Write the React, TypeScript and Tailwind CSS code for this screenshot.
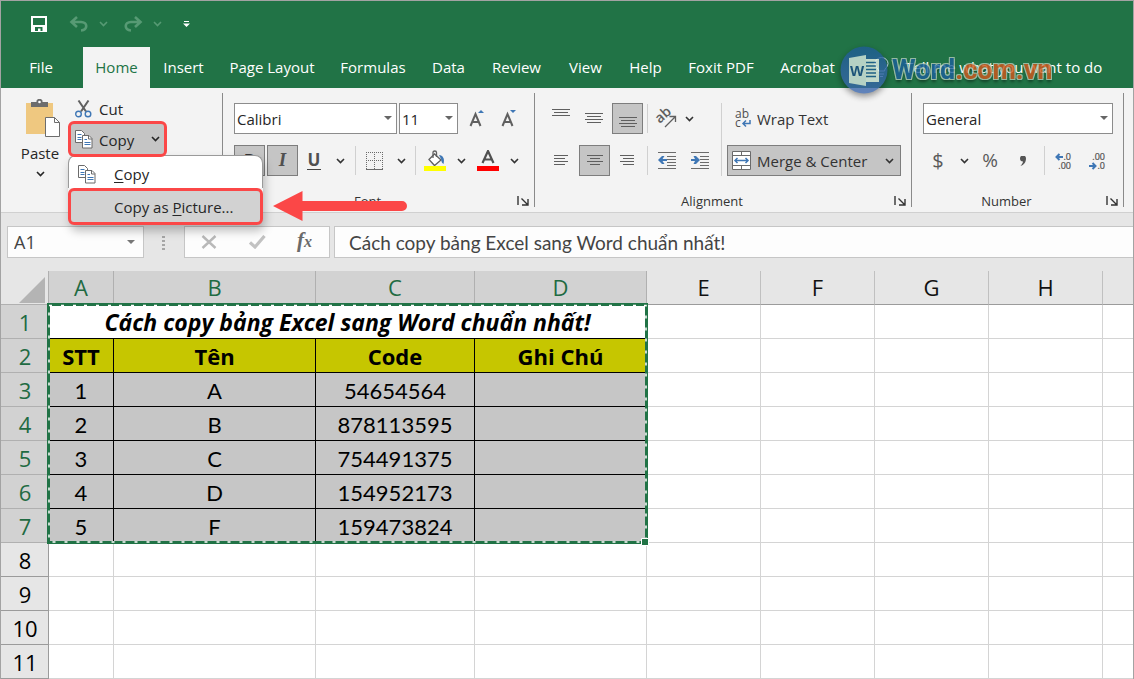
import type { ReactNode } from "react";
import clsx from "clsx";

const ui = "font-['Open_Sans','Noto_Sans',sans-serif]";
const sheet = "font-['Lato','Open_Sans',sans-serif]";

const tabs = [
    { name: "Home", width: "w-[67px]" },
    { name: "Insert", width: "w-[67px]" },
    { name: "Page Layout", width: "w-[110px]" },
    { name: "Formulas", width: "w-[92px]" },
    { name: "Data", width: "w-[59px]" },
    { name: "Review", width: "w-[77px]" },
    { name: "View", width: "w-[61px]" },
    { name: "Help", width: "w-[59px]" },
    { name: "Foxit PDF", width: "w-[92px]" },
    { name: "Acrobat", width: "w-[81px]" },
];
const columns = ["A", "B", "C", "D", "E", "F", "G", "H", ""];
const title = "Cách copy bảng Excel sang Word chuẩn nhất!";
const data = [
    ["1", "A", "54654564", ""],
    ["2", "B", "878113595", ""],
    ["3", "C", "754491375", ""],
    ["4", "D", "154952173", ""],
    ["5", "F", "159473824", ""],
];

/* ---------- icons ---------- */

function Chevron({ className }: { className?: string }) {
    return (
        <svg width="9" height="6" viewBox="0 0 9 6" className={className} fill="none" stroke="currentColor" strokeWidth="1.6">
            <path d="M1 1l3.5 3.5L8 1" />
        </svg>
    );
}

function Lines({ rows, width = 18 }: { rows: [number, number, number][]; width?: number }) {
    return (
        <svg width={width} height="21" shapeRendering="crispEdges" fill="#5f5f5f">
            {rows.map(([x, y, w]) => (
                <rect key={y} x={x} y={y} width={w} height="1" />
            ))}
        </svg>
    );
}

function CopyIcon() {
    return (
        <svg width="18" height="19" viewBox="0 0 18 19" fill="#fff" stroke="#6b6b6b">
            <path d="M.5.5h6l3 3v9h-9z" />
            <path d="M2.5 4.5h4M2.5 7.5h4M2.5 9.5h4" stroke="#3f77b5" />
            <path d="M7.500 5.500h6.500l3 3v9.500h-9.500z" />
            <path d="M13.500 5.500v3.500h3.500" fill="none" />
            <path d="M9.500 9.500h2.500M9.500 12.500h6M9.500 14.500h6" stroke="#3f77b5" />
        </svg>
    );
}

function CutIcon() {
    return (
        <svg width="17" height="18" viewBox="0 0 17 18" fill="none">
            <path d="M3.500.5l7.500 11M13.500.5L6 11.500" stroke="#606060" strokeWidth="2" />
            <circle cx="3.500" cy="14" r="2.800" stroke="#3f77b5" strokeWidth="1.400" />
            <circle cx="13" cy="14" r="2.800" stroke="#3f77b5" strokeWidth="1.400" />
        </svg>
    );
}

function PasteIcon() {
    return (
        <svg width="34" height="38" viewBox="0 0 34 38">
            <path d="M0 4h27v31H0z" fill="#efc880" />
            <path d="M5 3h5.500V1.500L12 0h3l1.500 1.500V3H22v5H5z" fill="#6d6d6d" />
            <circle cx="13.500" cy="3" r="1.300" fill="#fff" />
            <path d="M19.500 18.500h9l5 5v14h-14z" fill="#fff" stroke="#6d6d6d" />
            <path d="M28.500 18.500v5h5" fill="none" stroke="#6d6d6d" />
        </svg>
    );
}

function LauncherIcon() {
    return (
        <svg width="12" height="10" viewBox="0 0 12 10" fill="none" stroke="#333" strokeWidth="1.400">
            <path d="M1 0v9M4.500 2.500l6 6M11 3v6H5" />
        </svg>
    );
}

function FontSizeIcon({ up }: { up?: boolean }) {
    return (
        <svg width="18" height="20" viewBox="0 0 18 20" fill="none">
            <path d="M2.500 17L7.500 5l5 12M4 13h7" stroke="#5f5f5f" strokeWidth="2" />
            <path d={up ? "M10 4l3-3 3 3z" : "M10 1h6l-3 3z"} fill="#3f77b5" />
        </svg>
    );
}

function BordersIcon() {
    return (
        <svg width="18" height="18" viewBox="0 0 18 18" fill="none" stroke="#6b6b6b" shapeRendering="crispEdges">
            <path d="M0 .5h17M.5 0v17M16.500 0v17M8.500 0v17M0 8.500h17" strokeDasharray="1 1" />
            <path d="M0 17h17" strokeWidth="1" />
        </svg>
    );
}

function FillIcon() {
    return (
        <svg width="22" height="21" viewBox="0 0 22 21" fill="none">
            <path d="M5 9.500L10.500 4l6.500 6-6.500 5.500z" fill="#fff" stroke="#606060" strokeWidth="1.300" />
            <path d="M9 8V2.500C9 .5 12.500.5 12.500 2.500V7" stroke="#606060" strokeWidth="1.300" />
            <path d="M15 5c4 .5 6 3.500 4.500 9-2-1-2-3-2.500-5z" fill="#3f77b5" />
            <path d="M0 16h22v5H0z" fill="#ff0" />
        </svg>
    );
}

function FontColorIcon() {
    return (
        <svg width="22" height="21" viewBox="0 0 22 21" fill="none">
            <path d="M5.500 13L11 1l5.500 12M7.500 9.500h7" stroke="#505050" strokeWidth="2.200" />
            <path d="M0 16h22v5H0z" fill="#f00" />
        </svg>
    );
}

function OrientationIcon() {
    return (
        <svg width="20" height="20" viewBox="0 0 20 20" className="overflow-visible">
            <text x="2" y="13" transform="rotate(-42 5 13)" fontSize="14" fontWeight="600" fill="#5f5f5f" fontFamily="Open Sans">ab</text>
            <path d="M8 18L18 8M12.500 7.500H18.500V13" fill="none" stroke="#5f5f5f" strokeWidth="1.300" />
        </svg>
    );
}

function IndentIcon({ right }: { right?: boolean }) {
    return (
        <svg width="18" height="17" viewBox="0 0 18 17">
            <path d="M0 .5h18M9 4.500h9M9 7.500h9M9 10.500h9M9 13h9M0 16h18" stroke="#6b6b6b" shapeRendering="crispEdges" />
            <path d={right ? "M0 7h4L2.500 4H5l4 4-4 4H2.500L4 9H0z" : "M9 7H4.500L6.500 4H4L0 8l4 4h2.500L4.500 9H9z"} fill="#3f77b5" />
        </svg>
    );
}

function WrapIcon() {
    return (
        <svg width="17" height="18" viewBox="0 0 17 18" className="overflow-visible">
            <text x="0" y="8" fontSize="12" fill="#505050" fontFamily="Open Sans">ab</text>
            <text x="0" y="17" fontSize="12" fill="#505050" fontFamily="Open Sans">c</text>
            <path d="M15 10v3.500H8.500M11 10.500l-3 3 3 3" fill="none" stroke="#3f77b5" strokeWidth="1.500" />
        </svg>
    );
}

function MergeIcon() {
    return (
        <svg width="19" height="19" viewBox="0 0 19 19" fill="none">
            <path d="M.5.5h18v18H.5z" fill="#fff" stroke="#6b6b6b" />
            <path d="M0 4.500h19M0 14.500h19M9.500 0v4M9.500 15v4" stroke="#6b6b6b" />
            <path d="M3 9.500h13M5.500 7L3 9.500 5.500 12M13.500 7L16 9.500 13.500 12" stroke="#3f77b5" strokeWidth="1.500" />
        </svg>
    );
}

function DecimalIcon({ less }: { less?: boolean }) {
    return (
        <svg width="17" height="18" viewBox="0 0 17 18" fontSize="9" fill="#505050" stroke="#505050" strokeWidth=".2" fontFamily="Open Sans" textAnchor="end" className="overflow-visible">
            <text x="16" y="8">{less ? ".00" : ".0"}</text>
            <text x="16" y="17">{less ? ".0" : ".00"}</text>
            <path d={less ? "M0 14h6M3.500 11l3 3-3 3" : "M8 5H2M4.500 2l-3 3 3 3"} fill="none" stroke="#3f77b5" strokeWidth="2" />
        </svg>
    );
}

/* ---------- small parts ---------- */

function Tool({ label, className, active, children }: { label: string; className: string; active?: boolean; children: ReactNode }) {
    return (
        <button
            aria-label={label}
            className={clsx("flex h-[31px] shrink-0 items-center justify-center", active && "border border-[#7d7d7d] bg-[#c5c5c5]", className)}
        >
            {children}
        </button>
    );
}

function Divider({ className }: { className?: string }) {
    return <div className={clsx("h-[29px] w-px shrink-0 bg-[#d0d0d0]", className)} />;
}

function Dropdown({ label, value, className }: { label: string; value: string; className: string }) {
    return (
        <div className={clsx("relative", className)}>
            <select aria-label={label} className="h-[31px] w-full appearance-none border border-[#8c8c8c] bg-white pl-[2px] pt-px text-[15px] text-[#262626]">
                <option>{value}</option>
            </select>
            <svg width="8" height="4" className="pointer-events-none absolute right-[5px] top-[13px]">
                <path d="M0 0h8L4 4z" fill="#666" />
            </svg>
        </div>
    );
}

function Group({ label, className, children }: { label: string; className: string; children: ReactNode }) {
    return (
        <section className={clsx("flex h-[114px] shrink-0 flex-col border-r border-[#8a8a8a] pt-[10px]", className)}>
            {children}
            <div className="mt-auto flex h-3 items-center">
                <h2 className="flex-1 text-center text-[13px] leading-3 text-[#333]">{label}</h2>
                <button aria-label={`${label} settings`} className="flex w-[22px] justify-center">
                    <LauncherIcon />
                </button>
            </div>
        </section>
    );
}

/* ---------- title bar and tabs ---------- */

function Watermark() {
    return (
        <div className="absolute -left-[34px] -top-px z-10 flex items-center opacity-80">
            <svg width="48" height="48" viewBox="0 0 48 48" className="drop-shadow-[0_3px_3px_rgba(0,0,0,0.5)]">
                <defs>
                    <linearGradient id="disc" x1="0" y1="0" x2="0" y2="1">
                        <stop offset="0" stopColor="#1e5c94" />
                        <stop offset="1" stopColor="#3d68ad" />
                    </linearGradient>
                </defs>
                <circle cx="24" cy="24" r="23.500" fill="url(#disc)" />
                <path d="M26 13h13v23H26z" fill="#e9f2ea" />
                <path d="M26 16.500h10M26 20h10M26 23.500h10M26 27h10M26 30.500h10" stroke="#1e5c94" strokeWidth="1.500" />
                <path d="M9 12l17-3v31L9 37z" fill="#dbe9e4" />
                <text x="17" y="30" fontSize="15" fontWeight="700" fill="#1a4c86" textAnchor="middle" fontFamily="Liberation Sans">W</text>
            </svg>
            <span className="ml-1 whitespace-nowrap font-['Roboto',sans-serif] text-[27px] font-bold leading-[48px] text-[#1b5f9c] [text-shadow:-1px_-1px_0_#b4ccb8,1px_-1px_0_#b4ccb8,-1px_1px_0_#b4ccb8,1px_1px_0_#b4ccb8,0_3px_3px_#0008]">
                Word<span className="text-[#d2571c]">.com.vn</span>
            </span>
        </div>
    );
}

function TitleBar() {
    return (
        <header className="bg-[#217346] text-white">
            <div className="flex h-[46px] items-center pl-[30px] text-[#579a74]">
                <button aria-label="Save" className="text-white">
                    <svg width="16" height="16" viewBox="0 0 16 16" fill="none" stroke="currentColor">
                        <path d="M0 9h16v7H0z" fill="currentColor" stroke="none" />
                        <path d="M1 1h14v14H1z" strokeWidth="2" />
                        <path d="M4 11h7.500v4H9.500v-2.500H7V15H4z" fill="#217346" stroke="none" />
                    </svg>
                </button>
                <button aria-label="Undo" className="ml-[22px]">
                    <svg width="20" height="16" viewBox="0 0 20 16" fill="none" stroke="currentColor" strokeWidth="2.600">
                        <path d="M8 1L2.500 6 8 11M2.500 6H12c7 0 7 8 0 8.500" />
                    </svg>
                </button>
                <button aria-label="Undo list" className="ml-[10px] w-[10px]">
                    <Chevron />
                </button>
                <button aria-label="Redo" className="ml-[14px]">
                    <svg width="20" height="16" viewBox="0 0 20 16" fill="none" stroke="currentColor" strokeWidth="2.600">
                        <path d="M12 1l5.500 5L12 11M17.500 6H8c-7 0-7 8 0 8.500" />
                    </svg>
                </button>
                <button aria-label="Redo list" className="ml-[10px] w-[10px]">
                    <Chevron />
                </button>
                <button aria-label="Customize toolbar" className="ml-[20px] text-white">
                    <svg width="7" height="6" fill="currentColor">
                        <path d="M1 0h5v1H1zM0 2.500h7L3.500 6z" />
                    </svg>
                </button>
            </div>
            <nav className="flex h-[41px] items-stretch whitespace-nowrap text-[15px]">
                <button className="w-[82px] pr-[2px]">File</button>
                {tabs.map(({ name, width }) => (
                    <button key={name} className={clsx(width, name === "Home" && "bg-[#f3f3f3] text-[#217346]")}>
                        {name}
                    </button>
                ))}
                <div className="relative ml-[26px] flex items-center">
                    <Watermark />
                    <button className="flex items-center gap-4">
                        <svg width="15" height="21" viewBox="0 0 15 21" fill="none" stroke="#c9dcf0">
                            <path d="M4.500 14c0-3-3.500-3.500-3.500-7.500a6.500 6 0 0 1 13 0c0 4-3.500 4.500-3.500 7.500zM5 17h5M6 19.500h3" />
                        </svg>
                        Tell me what you want to do
                    </button>
                </div>
            </nav>
        </header>
    );
}

/* ---------- ribbon ---------- */

function Clipboard() {
    return (
        <section aria-label="Clipboard" className="relative flex h-[114px] w-[222px] shrink-0 border-r border-[#8a8a8a] text-[15px] text-[#262626]">
            <button className="flex w-[67px] flex-col items-center pl-[11px] pt-[6px]">
                <span className="pl-[5px]">
                    <PasteIcon />
                </span>
                <span className="mt-[6px] leading-5">Paste</span>
                <Chevron className="mt-2" />
            </button>
            <div className="pt-1">
                <button className="flex h-6 items-center gap-[7px] pl-[7px]">
                    <CutIcon />
                    Cut
                </button>
                <button className="relative z-20 flex h-9 w-[99px] items-center rounded-md border-3 border-[#fb4747] bg-[#c5c5c5] pl-1">
                    <CopyIcon />
                    <span className="pl-[6px] pt-[2px]">Copy</span>
                    <Chevron className="ml-auto mr-1" />
                </button>
            </div>
            <div role="menu" className="absolute left-[67px] top-[62px] z-10 w-[195px] rounded-lg shadow-[2px_6px_10px_rgba(0,0,0,0.25)]">
                <button role="menuitem" className="flex h-[33px] w-full items-center gap-[18px] rounded-t-lg border border-b-0 border-[#9a9a9a] bg-white pl-[9px] pt-1">
                    <CopyIcon />
                    <span><u className="underline-offset-2">C</u>opy</span>
                </button>
                <button role="menuitem" className="block h-[37px] w-full rounded-md border-3 border-[#fb4747] bg-[#d2d2d2] pl-[43px] pt-[2px] text-left">
                    Copy as <u className="underline-offset-2">P</u>icture...
                </button>
            </div>
            {/* pointer to the menu entry */}
            <svg width="134" height="30" viewBox="0 0 134 30" fill="#fb4747" className="absolute left-[272px] top-[98px] z-10">
                <path d="M0 15L29.500 0v10H129a5 5 0 0 1 0 10H29.500v10z" />
            </svg>
        </section>
    );
}

function FontGroup() {
    return (
        <Group label="Font" className="w-[312px]">
            <div className="flex pl-[11px]">
                <Dropdown label="Font name" value="Calibri" className="w-[163px]" />
                <Dropdown label="Font size" value="11" className="ml-[2px] w-[59px]" />
                <Tool label="Increase font size" className="ml-[3px] w-8"><FontSizeIcon up /></Tool>
                <Tool label="Decrease font size" className="w-8"><FontSizeIcon /></Tool>
            </div>
            <div className="mt-[11px] flex items-center pl-[11px] text-[#333]">
                <Tool label="Bold" active className="w-[31px] text-[17px] font-bold">B</Tool>
                <Tool label="Italic" active className="ml-[2px] w-[31px] font-['Liberation_Serif',serif] text-[19px] font-bold italic text-[#505050]">I</Tool>
                <Tool label="Underline" className="w-8"><span className="border-b border-[#444] px-px text-[17px] font-bold leading-[18px] text-[#505050]">U</span></Tool>
                <Tool label="Underline styles" className="w-5"><Chevron /></Tool>
                <Divider className="ml-[5px]" />
                <Tool label="Borders" className="w-[38px]"><BordersIcon /></Tool>
                <Tool label="Border styles" className="w-[14px]"><Chevron /></Tool>
                <Divider className="ml-[7px]" />
                <Tool label="Fill color" className="ml-1 w-[30px]"><FillIcon /></Tool>
                <Tool label="Fill colors" className="w-[22px]"><Chevron /></Tool>
                <Tool label="Font color" className="w-8"><FontColorIcon /></Tool>
                <Tool label="Font colors" className="w-[20px]"><Chevron /></Tool>
            </div>
        </Group>
    );
}

function AlignmentGroup() {
    return (
        <Group label="Alignment" className="w-[377px]">
            <div className="flex text-[#333]">
                <div className="pl-[10px]">
                    <div className="flex items-center">
                        <Tool label="Top align" className="w-8"><Lines rows={[[0, 1, 18], [2, 4, 14], [0, 7, 18]]} /></Tool>
                        <Tool label="Middle align" className="ml-px w-8"><Lines rows={[[0, 5, 18], [2, 8, 14], [0, 11, 18], [2, 14, 14]]} /></Tool>
                        <Tool label="Bottom align" active className="ml-[2px] w-[31px]"><Lines rows={[[0, 9, 18], [2, 12, 14], [0, 15, 18], [2, 18, 14]]} /></Tool>
                        <Divider className="ml-1" />
                        <Tool label="Orientation" className="ml-1 w-[30px]"><OrientationIcon /></Tool>
                        <Tool label="Orientation list" className="w-[14px]"><Chevron /></Tool>
                    </div>
                    <div className="mt-[11px] flex items-center">
                        <Tool label="Align left" className="w-8"><Lines width={14} rows={[[0, 5, 14], [0, 8, 11], [0, 11, 14], [0, 14, 11]]} /></Tool>
                        <Tool label="Center" active className="ml-[2px] w-[31px]"><Lines width={16} rows={[[0, 5, 16], [3, 8, 10], [0, 11, 16], [3, 14, 10]]} /></Tool>
                        <Tool label="Align right" className="w-[34px]"><Lines width={14} rows={[[0, 5, 14], [3, 8, 11], [0, 11, 14], [3, 14, 11]]} /></Tool>
                        <Divider className="ml-[3px]" />
                        <Tool label="Decrease indent" className="ml-1 w-[30px]"><IndentIcon /></Tool>
                        <Tool label="Increase indent" className="w-9"><IndentIcon right /></Tool>
                    </div>
                </div>
                <div className="ml-[3px] w-px bg-[#d0d0d0]" />
                <div className="ml-[5px] w-[174px] whitespace-nowrap text-[15px]">
                    <button className="flex h-[31px] items-center gap-[5px] pl-[8px]">
                        <WrapIcon />
                        <span className="pt-[2px]">Wrap Text</span>
                    </button>
                    <button className="mt-[11px] flex h-[31px] w-full items-center border border-[#7d7d7d] bg-[#c5c5c5] pl-1 pr-[6px]">
                        <MergeIcon />
                        <span className="pl-[6px] pt-[2px]">Merge &amp; Center</span>
                        <Chevron className="ml-auto" />
                    </button>
                </div>
            </div>
        </Group>
    );
}

function NumberGroup() {
    return (
        <Group label="Number" className="w-[212px]">
            <Dropdown label="Number format" value="General" className="ml-[11px] w-[190px]" />
            <div className="mt-[11px] flex items-center pl-[11px]">
                <Tool label="Currency" className="w-[30px] text-[20px] text-[#5a5a5a]">$</Tool>
                <Tool label="Currency list" className="w-[22px] text-[#333]"><Chevron /></Tool>
                <Tool label="Percent" className="w-[30px] text-[19px] text-[#5a5a5a]">%</Tool>
                <Tool label="Comma style" className="w-9">
                    <svg width="6" height="10" fill="#555"><path d="M0 2.500a2.500 2.500 0 0 1 6 0C6 6 4 9 .5 10 2 8 3 7 3 5.500 1 5.500 0 4.500 0 2.500z" /></svg>
                </Tool>
                <Divider className="ml-[3px]" />
                <Tool label="Increase decimal" className="w-9"><DecimalIcon /></Tool>
                <Tool label="Decrease decimal" className="w-8"><DecimalIcon less /></Tool>
            </div>
        </Group>
    );
}

/* ---------- formula bar ---------- */

function FormulaBar() {
    return (
        <div className="flex h-[58px] items-start bg-[#e6e6e6] pl-[6px] pt-[13px]">
            <div className="relative">
                <input aria-label="Name box" defaultValue="A1" className="h-8 w-[137px] border border-[#c6c6c6] bg-[#fdfdfd] pl-[6px] text-[18px] text-[#444]" />
                <svg width="8" height="4" className="absolute right-[9px] top-[14px]"><path d="M0 0h8L4 4z" fill="#777" /></svg>
            </div>
            <svg width="3" height="14" fill="#a6a6a6" className="ml-[18px] mt-[10px]">
                <path d="M0 0h3v2H0zM0 4h3v2H0zM0 8h3v2H0zM0 12h3v2H0z" />
            </svg>
            <div className="ml-[19px] flex h-8 w-[146px] items-center border border-[#c6c6c6] bg-[#fdfdfd] pl-4">
                <button aria-label="Cancel">
                    <svg width="16" height="14" viewBox="0 0 16 14" stroke="#b9b9b9" strokeWidth="2.400"><path d="M1.500 1l13 12M14.500 1l-13 12" /></svg>
                </button>
                <button aria-label="Enter" className="ml-8">
                    <svg width="17" height="14" viewBox="0 0 17 14" fill="none" stroke="#c2c2c2" strokeWidth="3.200"><path d="M1 7.500l5 4.500L15.500 1" /></svg>
                </button>
                <button aria-label="Insert function" className="ml-[31px] pb-[2px] font-['Liberation_Serif',serif] text-[21px] font-bold italic leading-6 text-[#6a6a6a]">
                    f<span className="text-[16px]">x</span>
                </button>
            </div>
            <input
                aria-label="Formula"
                defaultValue={title}
                className={clsx("ml-1 h-8 min-w-0 flex-1 border border-r-0 border-[#c6c6c6] bg-[#fdfdfd] pl-[14px] text-[19px] text-[#444]", sheet)}
            />
        </div>
    );
}

/* ---------- worksheet ---------- */

function RowHead({ n }: { n: number }) {
    return (
        <th className={clsx("h-[34px] border-b border-r p-0 pl-px pt-px font-normal leading-8", ui, n < 8 ? "border-[#b0b0b0] bg-[#d2d2d2] text-[#1f6b42]" : "border-[#9b9b9b] bg-[#e6e6e6] text-black")}>
            {n}
        </th>
    );
}

function EmptyCells({ count }: { count: number }) {
    return Array.from({ length: count }, (_, i) => <td key={i} className="border-b border-r border-[#d4d4d4] bg-white p-0 last:border-r-0" />);
}

function MarchingAnts() {
    return (
        <svg width="604" height="244" viewBox="0 0 604 244" fill="none" className="pointer-events-none absolute left-[46px] top-8">
            <path d="M1.500 1.500h598v238h-598z" stroke="#217346" strokeWidth="3" />
            <path d="M2 2.500h597v236.500H2z" stroke="#fff" strokeWidth="1.500" strokeDasharray="3 9 3 9 3 8" />
            <path d="M594.500 235.500h7v7h-7z" fill="#217346" stroke="#fff" />
        </svg>
    );
}

function Worksheet() {
    return (
        <main className="relative">
            <table className="w-full table-fixed border-separate border-spacing-0 text-center">
                <colgroup>
                    <col className="w-[48px]" />
                    <col className="w-[65px]" />
                    <col className="w-[202px]" />
                    <col className="w-[159px]" />
                    <col className="w-[172px]" />
                    <col className="w-[114px]" />
                    <col className="w-[114px]" />
                    <col className="w-[114px]" />
                    <col className="w-[114px]" />
                    <col />
                </colgroup>
                <thead className="text-[22px] leading-[33px]">
                    <tr>
                        <th className="h-[34px] border-b border-r border-[#b0b0b0] bg-[#e6e6e6] p-0">
                            <svg width="26" height="26" className="ml-auto mr-[3px] mt-1"><path d="M26 0v26H0z" fill="#b4b4b4" /></svg>
                        </th>
                        {columns.map((c, i) => (
                            <th key={i} className={clsx("h-[34px] border-b border-r p-0 font-normal last:border-r-0", i < 4 ? "border-[#b0b0b0] bg-[#d2d2d2] text-[#1f6b42]" : "border-r-[#c0c0c0] border-b-[#9b9b9b] bg-[#e6e6e6] text-[#111]")}>
                                {c}
                            </th>
                        ))}
                    </tr>
                </thead>
                <tbody className={clsx("text-[22px] leading-[31px] text-black", sheet)}>
                    <tr>
                        <RowHead n={1} />
                        <td colSpan={4} className={clsx("border-b border-r border-b-black border-r-[#d4d4d4] bg-white p-0 pt-px text-[23px] font-bold italic", ui)}>{title}</td>
                        <EmptyCells count={5} />
                    </tr>
                    <tr>
                        <RowHead n={2} />
                        {["STT", "Tên", "Code", "Ghi Chú"].map((h) => (
                            <td key={h} className={clsx("border-b border-r border-black bg-[#c6c600] p-0 pt-[2px] font-bold", ui)}>{h}</td>
                        ))}
                        <EmptyCells count={5} />
                    </tr>
                    {data.map((row, r) => (
                        <tr key={r}>
                            <RowHead n={r + 3} />
                            {row.map((cell, i) => (
                                <td key={i} className="border-b border-r border-black bg-[#c6c6c6] p-0 pt-[2px]">{cell}</td>
                            ))}
                            <EmptyCells count={5} />
                        </tr>
                    ))}
                    {[8, 9, 10, 11].map((n) => (
                        <tr key={n}>
                            <RowHead n={n} />
                            <EmptyCells count={9} />
                        </tr>
                    ))}
                </tbody>
            </table>
            <MarchingAnts />
        </main>
    );
}

export default function App() {
    return (
        <div className={clsx("min-h-screen overflow-hidden border border-b-0 border-[#a3a3a3] bg-white", ui)}>
            <TitleBar />
            <div className="flex border-b border-[#d0d0d0] bg-[#f3f3f3] py-[5px]">
                <Clipboard />
                <FontGroup />
                <AlignmentGroup />
                <NumberGroup />
            </div>
            <FormulaBar />
            <Worksheet />
        </div>
    );
}
